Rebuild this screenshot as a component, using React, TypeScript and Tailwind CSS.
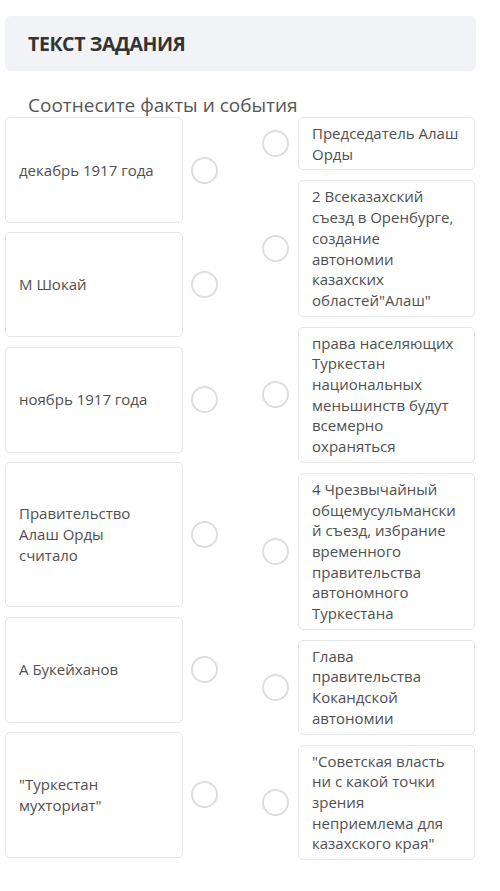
import React from "react";

const LEFT = [
  { text: "декабрь 1917 года", h: 106 },
  { text: "М Шокай", h: 105 },
  { text: "ноябрь 1917 года", h: 106 },
  { text: "Правительство Алаш Орды считало", h: 145 },
  { text: "А Букейханов", h: 106 },
  { text: "\"Туркестан мухториат\"", h: 126 },
];

const RIGHT = [
  "Председатель Алаш Орды",
  "2 Всеказахский съезд в Оренбурге, создание автономии казахских областей\"Алаш\"",
  "права населяющих Туркестан национальных меньшинств будут всемерно охраняться",
  "4 Чрезвычайный общемусульманский съезд, избрание временного правительства автономного Туркестана",
  "Глава правительства Кокандской автономии",
  "\"Советская власть ни с какой точки зрения неприемлема для казахского края\"",
];

function Circle() {
  return <div className="h-[27px] w-[27px] shrink-0 rounded-full border-[2px] border-[#dedede] bg-white" />;
}

export default function App() {
  return (
    <div
      className="min-h-[891px] w-[500px] bg-white"
      style={{ fontFamily: '"Open Sans", "Noto Sans", sans-serif' }}
    >
      <div className="pt-[16px] pl-[5px]">
        <div className="flex h-[55px] w-[471px] items-center rounded-md bg-[#f2f3f7] px-[23px]">
          <h1 className="text-[19.5px] font-bold tracking-[-0.4px] text-[#333]">ТЕКСТ ЗАДАНИЯ</h1>
        </div>
      </div>

      <p className="mt-[22px] h-[24px] pl-[28px] text-[19px] leading-[24px] text-[#555]">
        Соотнесите факты и события
      </p>

      <div className="flex pl-[5px]">
        <div className="flex w-[213px] flex-col gap-[9.4px]">
          {LEFT.map((item) => (
            <div key={item.text} className="flex items-center gap-[8.5px]">
              <div
                className="flex w-[178px] items-center rounded-[5px] border border-[#e6e6e6] pl-[13px] pr-[22px] text-[15px] leading-[21px] text-[#4f4f4f]"
                style={{ height: item.h }}
              >
                {item.text}
              </div>
              <Circle />
            </div>
          ))}
        </div>

        <div className="ml-[44px] flex w-[214px] flex-col gap-[10px]">
          {RIGHT.map((text) => (
            <div key={text} className="flex items-center gap-[9px]">
              <Circle />
              <div className="w-[177px] rounded-[5px] border border-[#e6e6e6] py-[5px] pl-[13px] pr-[10px] text-[15px] leading-[20.7px] break-words text-[#4f4f4f]">
                {text}
              </div>
            </div>
          ))}
        </div>
      </div>
    </div>
  );
}
